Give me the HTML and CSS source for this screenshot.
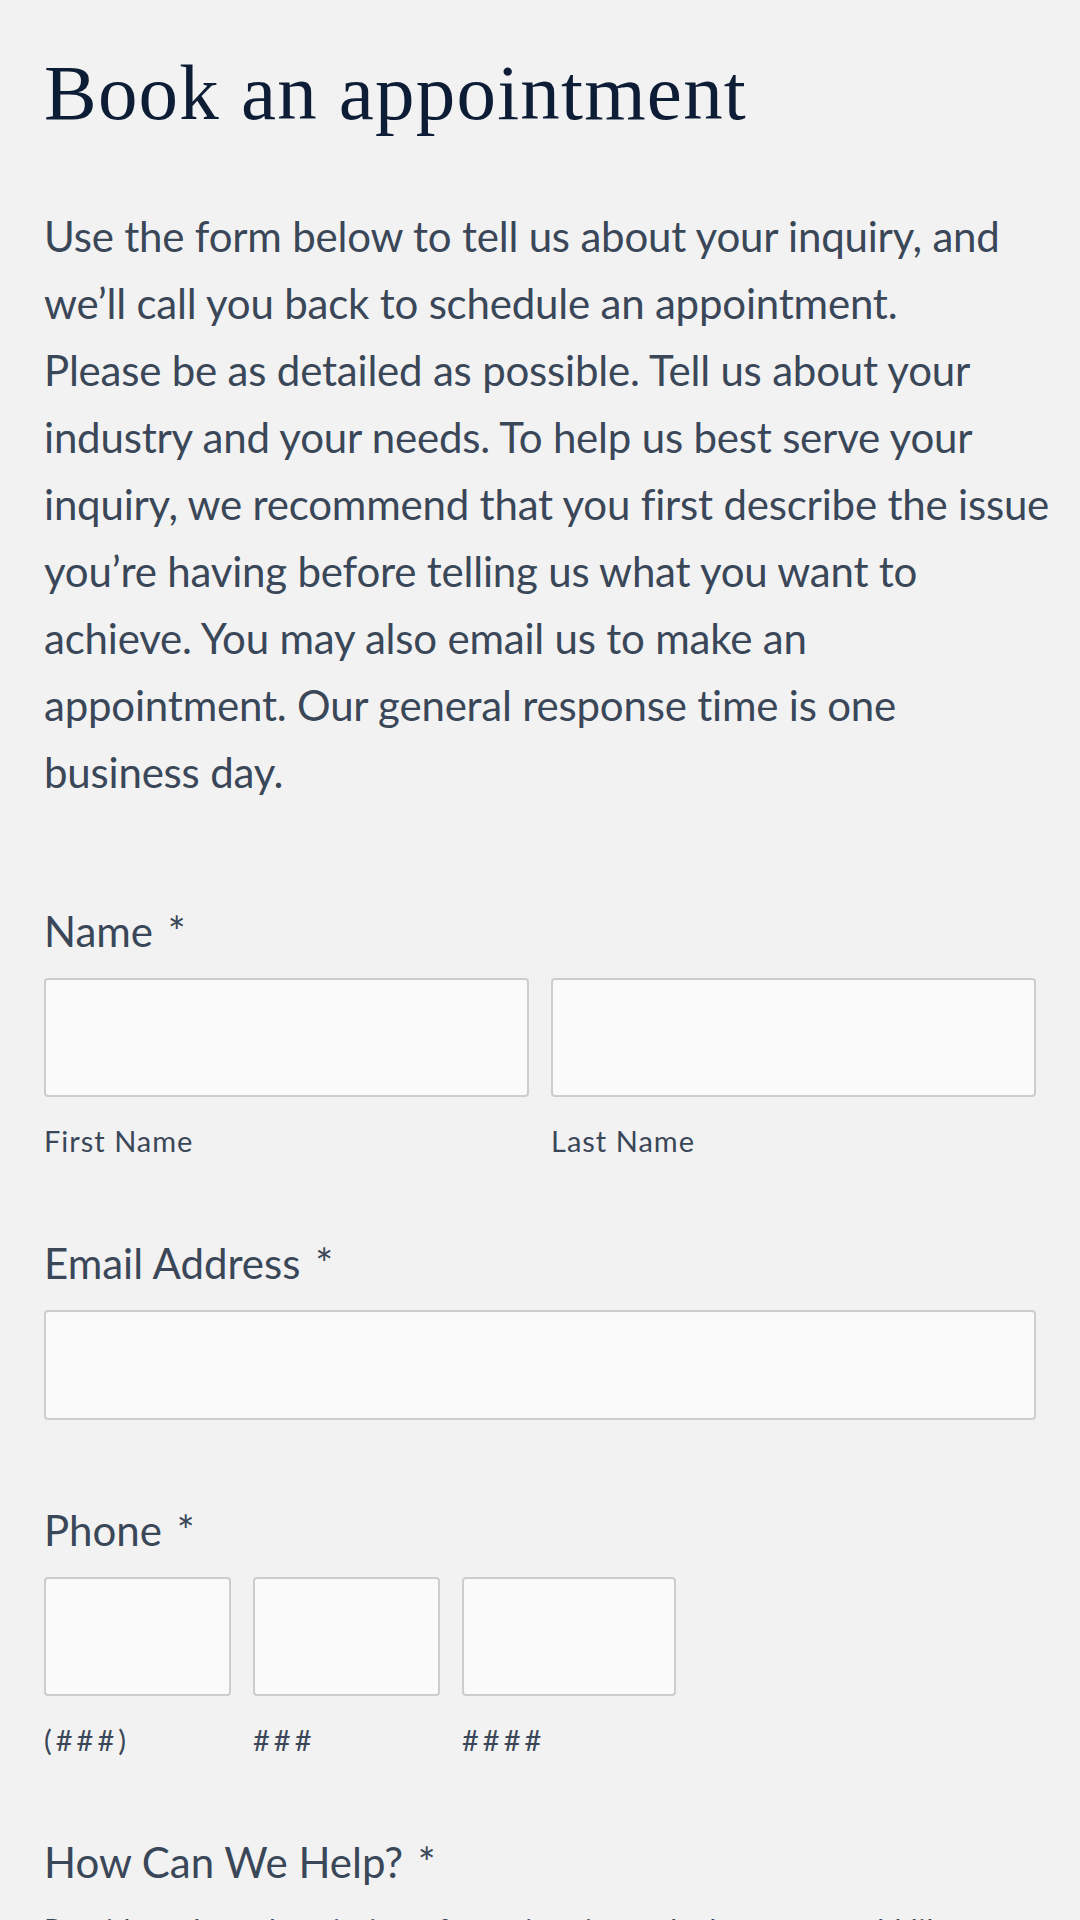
FILE: index.html
```html
<!DOCTYPE html>
<html lang="en">

<head>
    <meta charset="UTF-8">
    <meta name="viewport" content="width=device-width, initial-scale=1.0">
    <title>Book an appointment</title>
    <link rel="stylesheet" href="styles.css">
</head>

<body>
    <div class="container">
        <h1>Book an appointment</h1>

        <p class="intro">
            Use the form below to tell us about your inquiry, and<br>
            we’ll call you back to schedule an appointment.<br>
            Please be as detailed as possible. Tell us about your<br>
            industry and your needs. To help us best serve your<br>
            inquiry, we recommend that you first describe the issue<br>
            you’re having before telling us what you want to<br>
            achieve. You may also email us to make an<br>
            appointment. Our general response time is one<br>
            business day.
        </p>

        <form class="form">
            <div class="field">
                <label class="label">Name <span class="req">*</span></label>
                <div class="row">
                    <div class="part half">
                        <input type="text" id="fname">
                        <label for="fname" class="sub">First Name</label>
                    </div>
                    <div class="part half">
                        <input type="text" id="lname">
                        <label for="lname" class="sub">Last Name</label>
                    </div>
                </div>
            </div>

            <div class="field email-field">
                <label for="email" class="label">Email Address <span class="req">*</span></label>
                <input type="email" id="email" class="email">
            </div>

            <div class="field">
                <label class="label">Phone <span class="req">*</span></label>
                <div class="row">
                    <div class="part area">
                        <input type="text" id="p1">
                        <label for="p1" class="sub hash">(###)</label>
                    </div>
                    <div class="part prefix">
                        <input type="text" id="p2">
                        <label for="p2" class="sub hash">###</label>
                    </div>
                    <div class="part line">
                        <input type="text" id="p3">
                        <label for="p3" class="sub hash">####</label>
                    </div>
                </div>
            </div>

            <div class="field">
                <label for="help" class="label">How Can We Help? <span class="req">*</span></label>
                <p class="desc">Provide a short description of your inquiry and what you would like to achieve.</p>
                <textarea id="help"></textarea>
            </div>
        </form>
    </div>
</body>

</html>
```

FILE: styles.css
```css
body {
    margin: 0;
    background-color: #f2f2f2;
    color: #3a4758;
    font-family: "Lato", "Open Sans", sans-serif;
}

.container {
    padding: 0 44px;
}

h1 {
    margin: 45px 0 0;
    font-family: "Liberation Serif", serif;
    font-weight: normal;
    font-size: 79px;
    line-height: 95px;
    letter-spacing: 1.2px;
    color: #0e1d36;
}

.intro {
    margin: 63px 0 0;
    font-size: 42px;
    line-height: 67px;
    letter-spacing: -0.2px;
    white-space: nowrap;
}

.form {
    margin-top: 100px;
}

.field {
    margin-bottom: 80px;
}

.email-field {
    margin-bottom: 85px;
}

.label {
    display: block;
    font-size: 42px;
    line-height: 50px;
    margin-bottom: 22px;
}

.req {
    margin-left: 4px;
}

.row {
    display: flex;
    gap: 22px;
}

.half {
    flex: 1;
}

.area,
.prefix {
    width: 187px;
}

.line {
    width: 214px;
}

input,
textarea {
    display: block;
    box-sizing: border-box;
    width: 100%;
    height: 119px;
    margin: 0;
    background-color: #fafafa;
    border: 2px solid #cdcdcd;
    border-radius: 4px;
}

.email {
    height: 110px;
}

.sub {
    display: block;
    margin-top: 26px;
    font-size: 29px;
    line-height: 35px;
    letter-spacing: 1px;
}

.hash {
    letter-spacing: 4px;
}

.desc {
    margin: 0 0 20px;
    font-size: 29px;
    line-height: 40px;
    letter-spacing: 1px;
}
```
